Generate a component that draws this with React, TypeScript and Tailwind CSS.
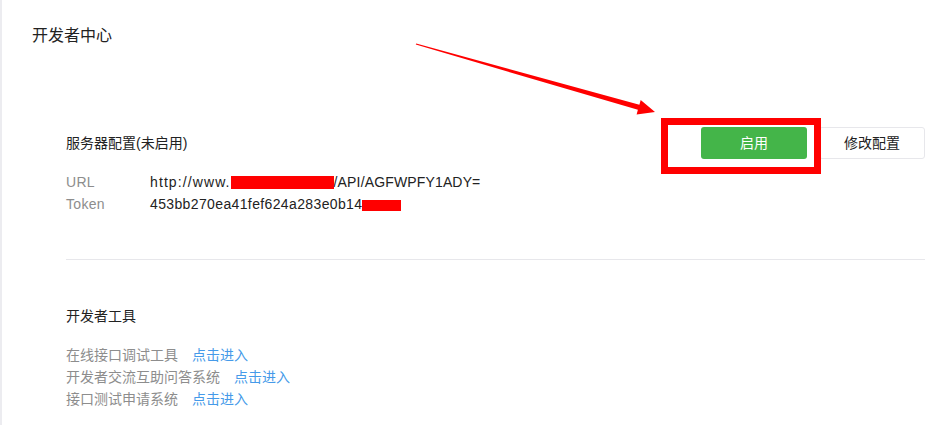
const tools = [
  { name: '在线接口调试工具' },
  { name: '开发者交流互助问答系统' },
  { name: '接口测试申请系统' },
];

// annotation arrow, built from start point to tip
function arrowPoints() {
  const sx = 416, sy = 44, tx = 655, ty = 112;
  const len = Math.hypot(tx - sx, ty - sy);
  const ux = (tx - sx) / len, uy = (ty - sy) / len;
  const nx = -uy, ny = ux;
  const bx = tx - ux * 17, by = ty - uy * 17;
  const p = (x: number, y: number) => `${x.toFixed(1)},${y.toFixed(1)}`;
  return [
    p(sx + nx * 0.6, sy + ny * 0.6),
    p(bx + nx * 2.6, by + ny * 2.6),
    p(bx + nx * 7.5, by + ny * 7.5),
    p(tx, ty),
    p(bx - nx * 7.5, by - ny * 7.5),
    p(bx - nx * 2.6, by - ny * 2.6),
    p(sx - nx * 0.6, sy - ny * 0.6),
  ].join(' ');
}

export default function App() {
  return (
    <div
      className="relative h-[425px] w-[941px] overflow-hidden border-l-2 border-[#ececf0] bg-white text-[14px] text-[#222]"
      style={{ fontFamily: '"Liberation Sans", "Noto Sans CJK SC", sans-serif' }}
    >
      <h1 className="pl-[30px] pt-[26px] text-[16px] leading-[20px] font-normal text-[#222]">开发者中心</h1>

      <div className="ml-[64px] mr-[16px]">
        <div className="mt-[81px] flex items-center justify-between">
          <div className="leading-[22px]">服务器配置(未启用)</div>
          <div className="flex">
            <button className="h-[32px] w-[106px] rounded-[3px] bg-[#44b549] text-[14px] text-white">启用</button>
            <button className="ml-[12px] h-[32px] w-[106px] rounded-[3px] border border-[#e7e7eb] bg-white text-[14px] text-[#222]">
              修改配置
            </button>
          </div>
        </div>

        <div className="mt-[12px] leading-[22px]">
          <div className="flex">
            <span className="w-[84px] text-[#8d8d8d] tracking-[0.3px]">URL</span>
            <span className="flex items-center">
              <span className="tracking-[1.1px]">http://www.</span>
              <span className="inline-block h-[13px] w-[103px] bg-[#ff0000]" />
              <span className="tracking-[0.15px]">/API/AGFWPFY1ADY=</span>
            </span>
          </div>
          <div className="flex">
            <span className="w-[84px] text-[#8d8d8d] tracking-[0.3px]">Token</span>
            <span className="flex items-center tracking-[0.37px]">
              453bb270ea41fef624a283e0b14
              <span className="mt-[2px] inline-block h-[11px] w-[39px] bg-[#ff0000]" />
            </span>
          </div>
        </div>

        <div className="mt-[44px] border-t border-[#e7e7eb]" />

        <div className="mt-[45px] leading-[22px]">开发者工具</div>
        <div className="mt-[17px] leading-[22px]">
          {tools.map((t) => (
            <div key={t.name} className="flex">
              <span className="text-[#8d8d8d]">{t.name}</span>
              <a className="ml-[14px] text-[#459ae9]" href="#">
                点击进入
              </a>
            </div>
          ))}
        </div>
      </div>

      <div className="absolute left-[659px] top-[118px] h-[56px] w-[160px] border-[7px] border-[#ff0000]" />
      <svg className="pointer-events-none absolute left-[-2px] top-0" width="941" height="425">
        <polygon points={arrowPoints()} fill="#ff0000" />
      </svg>
    </div>
  );
}
